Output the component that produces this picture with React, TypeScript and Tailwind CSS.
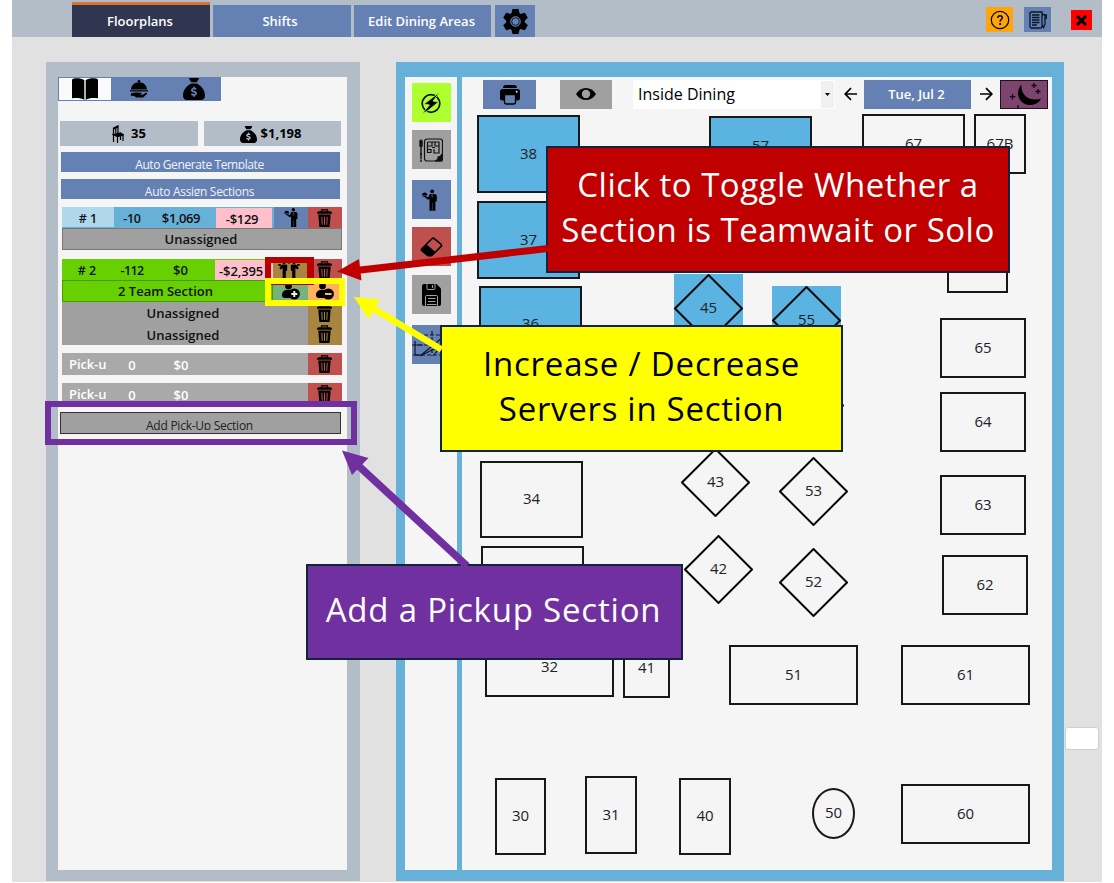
import type { ReactNode } from 'react';
import { FaSackDollar } from 'react-icons/fa6';

type IconProps = { className?: string };

const BookIcon = ({ className }: IconProps) => (
  <svg className={className} viewBox="0 0 26 22" fill="#000">
    <path d="M0 2.200C0 1 1 .6 2 .5c4-.5 7.500 0 10.300 1.700V22C9.500 20.300 6 19.700 0 20.300zM26 2.200C26 1 25 .6 24 .5c-4-.5-7.500 0-10.300 1.700V22c2.800-1.700 6.300-2.300 12.300-1.700z" />
  </svg>
);

const ServeIcon = ({ className }: IconProps) => (
  <svg className={className} viewBox="0 0 18 18" fill="#000">
    <circle cx="9" cy="1.300" r="1.300" />
    <path d="M1 9.500C1.300 5 4.500 2.200 9 2.200s7.700 2.800 8 7.300zM0 10.200h18v1.200H0zM1 13.300l4.500-.9 5.500.4c1 .2.800 1.300-.2 1.500l-2.300.3 4 .2 3-1.800c1.500-.6 2.200.4 1.200 1.300L13 17.500H6.500L4 16l-3-.3z" />
  </svg>
);

const ChairIcon = ({ className }: IconProps) => (
  <svg className={className} viewBox="0 0 12 18" fill="none" stroke="#000" strokeWidth="1.200">
    <path d="M1.500 17V3L6 .8V8M1.500 4L6 2M3.800 3v5M5.500 11.500V18M11 10.500V16M8.500 11v4" />
    <path d="M1 9.500l7.500-1.700L11.500 10l-6 1.700z" fill="#000" />
  </svg>
);

const WaiterIcon = ({ className }: IconProps) => (
  <svg className={className} viewBox="0 0 14 20" fill="#000">
    <circle cx="9.500" cy="1.900" r="1.800" />
    <path d="M7.300 4.300h4.200c1.500 0 2.300.8 2.300 2v5.200h-1.300V20H7V9L5.600 9.800 2.500 7.300l.8-1 2.500 1.300z" />
    <path d="M0 5.700C.2 3.800 1.100 3 2.500 3S4.900 3.800 5 5.700zM1 6.200h3l-.5 1H1.500z" />
    <path d="M9.500 4.500l-.6 1.300.6 2 .6-2zM9.700 13v7" stroke="#6581b3" strokeWidth=".4" />
  </svg>
);

const TeamIcon = ({ className }: IconProps) => (
  <svg className={className} viewBox="0 0 22 17" fill="#000">
    <path d="M4.500 3.500H8c1 0 1.400.8 1.300 1.500L9 10H7.800v7H4.600V7L2.500 8.500 1.300 7 3 4.500zM17.500 3.500H14c-1 0-1.400.8-1.300 1.500l.3 5h1.200v7h3.200V7l2.100 1.500L20.700 7 19 4.500zM0 3h3l-.5 2H.8zM22 3h-3l.5 2h1.700z" />
    <circle cx="6" cy="1.500" r="1.500" />
    <circle cx="16" cy="1.500" r="1.500" />
    <path d="M9.500 1h3L11 3.300z" />
  </svg>
);

const TrashIcon = ({ className }: IconProps) => (
  <svg className={className} viewBox="0 0 15 18" fill="none" stroke="#000">
    <path d="M4.500 2.500V.8h6v1.700" strokeWidth="1.200" />
    <path d="M0 4.200C0 2.900.8 2.200 2 2.200h11c1.200 0 2 .7 2 2v.6H0z" fill="#000" stroke="none" />
    <path d="M1.300 5.500h12.400L12.600 18H2.400z" fill="#000" stroke="none" />
    <path d="M4.800 7.800l.4 8M7.500 7.800v8M10.200 7.800l-.4 8" stroke="currentColor" strokeWidth="1" />
  </svg>
);

const PersonIcon = ({ className, minus }: IconProps & { minus?: boolean }) => (
  <svg className={className} viewBox="0 0 18 17" fill="#000">
    <circle cx="6.500" cy="3" r="3.400" />
    <path d="M0 12c0-3 2-5 5-5h6v8H3c-2 0-3-1-3-3z" />
    <circle cx="12.300" cy="11" r="5.600" />
    <path
      d={minus ? 'M9 10h6.600v2H9z' : 'M11.300 8h2v2h2v2h-2v2h-2v-2h-2v-2h2z'}
      fill={minus ? '#ffb060' : '#e7efe7'}
    />
  </svg>
);

const GearIcon = ({ className }: IconProps) => (
  <svg className={className} viewBox="-12.500 -12.500 25 25">
    {[0, 60, 120].map((angle) => (
      <path key={angle} d="M-3-12.500h6l1.300 5.500v14L3 12.500h-6L-4.300 7v-14z" transform={`rotate(${angle})`} />
    ))}
    <circle r="9.200" />
    <circle r="4.800" fill="#6581b3" stroke="#6581b3" />
    <circle r="3.800" fill="#6581b3" stroke="#101827" strokeWidth="1" />
  </svg>
);

const HelpIcon = ({ className }: IconProps) => (
  <svg className={className} viewBox="0 0 20 20" fill="none" stroke="#000" strokeWidth="1.200">
    <circle cx="10" cy="10" r="8.700" />
    <path d="M7.800 7.900C7.800 6.500 8.700 5.700 10 5.700s2.300.8 2.300 2.100c0 1.700-2.200 1.900-2.200 3.900" strokeWidth="1.400" />
    <circle cx="10.100" cy="14" r=".5" fill="#000" />
  </svg>
);

const NotesIcon = ({ className }: IconProps) => (
  <svg className={className} viewBox="0 0 18 18" fill="none" stroke="#0a1423" strokeWidth="1.300">
    <path d="M1.500 1h11.500v14.500c0 1-.6 1.500-1.500 1.500H2.500c-1 0-1.500-.5-1.500-1.500V1M3 4h7.500M3 6.500h7.500M3 9h7.500M3 11.500h7.500M3 14h5M13 5c0-2 3-2 3 0v8l-1.500 3.500-1.500-3M16 4h1.500v4" />
  </svg>
);

const BoltIcon = ({ className }: IconProps) => (
  <svg className={className} viewBox="0 0 22 22">
    <circle cx="11" cy="11.500" r="8.800" fill="none" stroke="#0a1400" strokeWidth="1.700" />
    <path d="M20 0L14 4.500 4 12l5.500 1L2 22l6-3.500L18.500 10 13 9z" stroke="#adff2f" strokeWidth=".8" />
  </svg>
);

const PlanIcon = ({ className }: IconProps) => (
  <svg className={className} viewBox="0 0 24 24" fill="none" stroke="#111" strokeWidth="1.200">
    <path d="M2 1.500v20M1 3v5h2V3zM1 16h2M2 22v2" strokeWidth="1.400" />
    <rect x="5.500" y="1" width="18" height="22" rx="2.500" />
    <path d="M8.500 4H20v11h-5v-4M8.500 4v7.500H12v3H8.500zM13 4v4H9M16 4v4h4M13 9.500h3" />
    <path d="M23 16v7h-7c4-1 3-3 3-4 2 0 3-.5 4-3z" fill="#111" />
  </svg>
);

const EraserIcon = ({ className }: IconProps) => (
  <svg className={className} viewBox="0 0 22 20">
    <path d="M1.500 11.500L11.500 1.800q1.200-1.200 2.500 0l6.400 5.400q1.200 1.200 0 2.400L11 18.700H7.500L1.500 14q-1.200-1.200 0-2.500z" fill="none" stroke="#000" strokeWidth="1.600" />
    <path d="M6 7.300l9.300 8L11 18.700H7.500L1.500 14q-1.200-1.200 0-2.500z" />
  </svg>
);

const SaveIcon = ({ className }: IconProps) => (
  <svg className={className} viewBox="0 0 19 22">
    <path d="M2 0h12.500L19 4.500V20q0 2-2 2H2q-2 0-2-2V2q0-2 2-2z" />
    <path d="M5 0v4.500q0 1 1 1h6q1 0 1-1V0M3.500 22V12.500q0-1 1-1h10q1 0 1 1V22" fill="none" stroke="#a0a0a0" />
    <path d="M10.500 1v3M6 14.500h7.500M6 17.500h7.500M5 20.500h9.500" stroke="#a0a0a0" strokeWidth="1.200" />
  </svg>
);

const GridIcon = ({ className }: IconProps) => (
  <svg className={className} viewBox="0 0 39 39" fill="none" stroke="#0c1630" strokeWidth="1.200">
    <path d="M6 10h26M20 6v25M0 20h39M3 30h34" strokeDasharray="4 2" />
    <path d="M3 16v14M1 30h8M3 20h8M31 12L8 31l12-6 8-3-6 8" />
  </svg>
);

const PrinterIcon = ({ className }: IconProps) => (
  <svg className={className} viewBox="0 0 20 20">
    <path d="M3 3q0-3 3-3h8q3 0 3 3zM2.500 4h15Q20 4 20 6.500V13q0 2.500-2.500 2.500h-15Q0 15.500 0 13V6.500Q0 4 2.500 4z" />
    <path d="M4.500 9.500h11V17q0 2-2 2h-7q-2 0-2-2z" fill="#6581b3" stroke="#000" strokeWidth="1.300" />
    <circle cx="16.700" cy="6.800" r="1" fill="#cfd9ea" />
  </svg>
);

const EyeIcon = ({ className }: IconProps) => (
  <svg className={className} viewBox="0 0 20 12">
    <path d="M0 6C2.500 2 6 0 10 0s7.500 2 10 6c-2.500 4-6 6-10 6S2.500 10 0 6z" />
    <circle cx="10" cy="6" r="4.200" fill="#a0a0a0" />
  </svg>
);

const MoonIcon = ({ className }: IconProps) => (
  <svg className={className} viewBox="0 0 46 27">
    <path d="M20.500 3.500C14 10 17 23 27.500 24c6 .5 10.500-2 12.500-6.500C31 21 19.500 16 20.500 3.500z" />
    <path d="M33 2v5M30.500 4.500h5M37 8v5M34.500 10.500h5M11.500 13v5.500M8.800 15.700h5.500M17 24v3" stroke="#160414" strokeWidth="1.300" />
  </svg>
);

const Arrow = ({ right }: { right?: boolean }) => (
  <svg className="h-3.5 w-[13px] shrink-0" viewBox="0 0 13 14" fill="none" stroke="#000" strokeWidth="1.700">
    <path d={right ? 'M0 7h11.500M6 1.200L11.800 7 6 12.800' : 'M13 7H1.500M7 1.200L1.200 7 7 12.800'} />
  </svg>
);

const Tab = ({ children, className }: { children: ReactNode; className: string }) => (
  <div className={`flex h-8 items-center justify-center text-[13px] font-semibold text-white ${className}`}>{children}</div>
);

const TrashCell = ({ className = 'bg-[#c0504d] text-[#c0504d]' }: IconProps) => (
  <div className={`flex w-[34px] shrink-0 items-center justify-center pr-0.5 ${className}`}>
    <TrashIcon className="h-[18px] w-[15px]" />
  </div>
);

const PickupRow = () => (
  <div className="flex h-[22px] bg-[#a9a9a9] text-[13px] font-semibold text-white">
    <span className="w-[52px] pl-[7px] leading-[23px] tracking-[-0.1px]">Pick-u</span>
    <span className="w-9 text-center leading-6">0</span>
    <span className="w-[62px] text-center leading-6">$0</span>
    <span className="flex-1" />
    <TrashCell />
  </div>
);

type Shape = 'rect' | 'diamond' | 'oval';
type TableInfo = { label?: string; x: number; y: number; w: number; h: number; shape?: Shape; blue?: boolean };

const tables: TableInfo[] = [
  { label: '38', x: 477, y: 115, w: 103, h: 78, blue: true },
  { label: '37', x: 477, y: 201, w: 103, h: 78, blue: true },
  { label: '36', x: 479, y: 286, w: 103, h: 77, blue: true },
  { label: '57', x: 709, y: 116, w: 103, h: 60, blue: true },
  { label: '67', x: 862, y: 114, w: 103, h: 60 },
  { label: '67B', x: 974, y: 114, w: 52, h: 60 },
  { x: 947, y: 216, w: 61, h: 77 },
  { label: '65', x: 940, y: 318, w: 86, h: 60 },
  { label: '64', x: 940, y: 392, w: 86, h: 60 },
  { label: '63', x: 940, y: 475, w: 86, h: 60 },
  { label: '62', x: 942, y: 555, w: 86, h: 60 },
  { label: '45', x: 674, y: 274, w: 69, h: 69, shape: 'diamond', blue: true },
  { label: '55', x: 772, y: 286, w: 69, h: 69, shape: 'diamond', blue: true },
  { x: 775, y: 371, w: 69, h: 69, shape: 'diamond' },
  { label: '43', x: 681, y: 448, w: 69, h: 69, shape: 'diamond' },
  { label: '53', x: 779, y: 457, w: 69, h: 69, shape: 'diamond' },
  { label: '42', x: 684, y: 535, w: 69, h: 69, shape: 'diamond' },
  { label: '52', x: 779, y: 548, w: 69, h: 69, shape: 'diamond' },
  { label: '34', x: 480, y: 461, w: 103, h: 77 },
  { x: 481, y: 546, w: 103, h: 77 },
  { label: '32', x: 485, y: 637, w: 129, h: 60 },
  { label: '41', x: 623, y: 638, w: 47, h: 60 },
  { label: '51', x: 729, y: 645, w: 129, h: 60 },
  { label: '61', x: 901, y: 645, w: 129, h: 60 },
  { label: '60', x: 901, y: 784, w: 129, h: 60 },
  { label: '30', x: 495, y: 778, w: 51, h: 77 },
  { label: '31', x: 585, y: 776, w: 52, h: 78 },
  { label: '40', x: 679, y: 778, w: 52, h: 77 },
  { label: '50', x: 812, y: 788, w: 43, h: 51, shape: 'oval' },
];

const Table = ({ label, x, y, w, h, shape = 'rect', blue }: TableInfo) => {
  const frame = shape === 'rect' ? 'border-2 border-[#181818]' : shape === 'oval' ? 'rounded-[50%] border-2 border-[#181818]' : '';
  return (
    <div
      className={`absolute flex items-center justify-center text-[15px] text-[#222] ${frame} ${blue ? 'bg-[#5bb3e2]' : ''}`}
      style={{ left: x - 462, top: y - 77, width: w, height: h }}
    >
      {shape === 'diamond' && (
        <svg className="absolute inset-0 size-full" viewBox="0 0 69 69" fill="none" stroke="#080808" strokeWidth="2">
          <path d="M34.500 1L68 34.500 34.500 68 1 34.500z" />
        </svg>
      )}
      {label && <span className="relative pb-0.5">{label}</span>}
    </div>
  );
};

const ToolButton = ({ children, className }: { children: ReactNode; className: string }) => (
  <div className={`flex size-[39px] shrink-0 items-center justify-center ${className}`}>{children}</div>
);

const Sections = () => (
  <div className="text-[13px] font-semibold text-[#111]">
    <div className="mr-[5px] ml-1">
      <div className="mt-2 flex h-[21px] bg-[#67b0d8] leading-[23px]">
        <span className="h-5 w-[52px] bg-[#b0d8ec] text-center text-[12.500px]"># 1</span>
        <span className="w-9 text-center text-[12.500px] tracking-[-0.3px]">-10</span>
        <span className="w-[66px] pr-1 text-center tracking-[-0.4px]">$1,069</span>
        <span className="mt-px w-14 bg-[#ffc0cb] pr-1 text-center leading-[22px] tracking-[-0.3px]">-$129</span>
        <span className="ml-0.5 flex w-[34px] items-center justify-center bg-[#6581b3]"><WaiterIcon className="h-[19px] w-[14px]" /></span>
        <TrashCell />
      </div>
      <div className="h-[22px] border border-[#777] bg-[#a0a0a0] pr-0.5 text-center leading-[21px]">Unassigned</div>
      <div className="mt-[9px] flex h-[21px] bg-[#66d000] leading-[23px]">
        <span className="w-[52px] pr-0.5 text-center text-[12.500px]"># 2</span>
        <span className="w-9 text-center text-[12.500px] tracking-[-0.6px]">-112</span>
        <span className="w-[65px] pr-1 text-center">$0</span>
        <span className="mt-px w-[58px] overflow-hidden bg-[#ffc0cb] pl-1 leading-[22px] tracking-[-0.1px]">-$2,395</span>
        <span className="flex w-[35px] items-center justify-center bg-[#a88642] pr-1"><TeamIcon className="h-[17px] w-[22px]" /></span>
        <TrashCell />
      </div>
      <div className="flex h-[22px]">
        <span className="w-[211px] border border-[#4b9a00] bg-[#66d000] pr-1 text-center leading-[21px]">2 Team Section</span>
        <span className="flex w-[35px] items-center justify-center bg-[#74b37a]"><PersonIcon className="h-[17px] w-[18px]" /></span>
        <span className="flex w-[34px] items-center justify-center bg-[#ffb060]"><PersonIcon minus className="h-[17px] w-[18px]" /></span>
      </div>
      {['first', 'second'].map((seat) => (
        <div key={seat} className="flex h-[21.500px] bg-[#a0a0a0]">
          <span className="flex-1 pr-1 text-center leading-[22px]">Unassigned</span>
          <TrashCell className="bg-[#a88642] text-[#a88642]" />
        </div>
      ))}
      <div className="mt-2 flex flex-col gap-2">
        <PickupRow />
        <PickupRow />
      </div>
    </div>
    <div className="mt-[7px] mr-1.5 ml-0.5 h-[22px] overflow-hidden border border-[#333] bg-[#a0a0a0] text-[12px] font-normal">
      <p className="h-[17px] overflow-hidden pr-0.5 text-center leading-[25px] tracking-[-0.25px] text-[#222]">Add Pick-Up Section</p>
    </div>
  </div>
);

const callout = 'absolute flex flex-col items-center justify-center border-2 border-[#10243a] pb-[5px] whitespace-nowrap text-[33px] leading-[45px]';

export default function App() {
  return (
    <div className="relative h-[883px] w-[1114px] overflow-hidden bg-white pr-3 pl-3 font-['Open_Sans',sans-serif]">
      <div className="flex h-[882px] flex-col bg-[#e1e1e1]">
        <header className="flex h-[37px] shrink-0 items-end bg-[#b2bdc7] pr-2.5 pl-[60px]">
          <Tab className="mr-[3px] h-[35px] w-[138px] border-t-[3px] border-[#d9722e] bg-[#30364f] pt-0.5 pr-0.5">Floorplans</Tab>
          <Tab className="mr-[3px] w-[138px] bg-[#6581b3] pt-0.5 pr-1">Shifts</Tab>
          <Tab className="mr-1 w-[137px] bg-[#6581b3] pt-0.5 pr-0.5">Edit Dining Areas</Tab>
          <Tab className="w-10 bg-[#6581b3]"><GearIcon className="size-[25px]" /></Tab>
          <div className="mb-[5px] ml-auto flex h-[25px] w-[27px] items-center justify-center bg-[#ffa50a]"><HelpIcon className="size-5" /></div>
          <div className="mb-[5px] ml-[11px] flex h-[25px] w-[27px] items-center justify-center bg-[#6581b3]"><NotesIcon className="size-[18px]" /></div>
          <div className="mb-[7px] ml-5 flex h-5 w-[21px] items-center justify-center bg-[#ff0000]">
            <svg className="size-[11px]" viewBox="0 0 11 11" stroke="#000" strokeWidth="3"><path d="M1 1l9 9M10 1l-9 9" /></svg>
          </div>
        </header>

        <main className="mt-[25px] flex h-[819px] pl-[34px]">
          <aside className="w-[314px] bg-[#b2bdc7] pt-[15px] pr-[13px] pb-[11px] pl-3">
            <div className="h-full bg-[#f5f5f5]">
              <div className="flex h-6 w-[163px] border border-[#6581b3] bg-[#6581b3]">
                <span className="flex w-[52px] items-center justify-center bg-[#fafafa]"><BookIcon className="h-[22px] w-[26px]" /></span>
                <span className="flex w-14 items-center justify-center"><ServeIcon className="h-[18px] w-[18px]" /></span>
                <span className="flex w-[53px] items-center justify-center"><FaSackDollar className="h-[22px] w-6" /></span>
              </div>
              <div className="mt-5 ml-0.5 flex h-[25px] gap-1.5 text-[13px] font-bold text-black">
                <div className="flex w-[138px] items-center justify-center gap-[7px] bg-[#b2bdc7]"><ChairIcon className="h-[18px] w-3" />35</div>
                <div className="flex w-[137px] items-center justify-center gap-1 bg-[#b2bdc7] pt-px pr-1"><FaSackDollar className="size-[17px]" /><span>$1,198</span></div>
              </div>
              <div className="mt-1.5 mr-[7px] ml-[3px] h-5 bg-[#6581b3] text-center text-[12px] text-[#eef3fb]">
                <p className="h-[17px] overflow-hidden pr-0.5 leading-[25px] tracking-[-0.4px]">Auto Generate Template</p>
              </div>
              <div className="mt-[7px] mr-[7px] ml-[3px] h-5 bg-[#6581b3] text-center text-[12px] text-[#eef3fb]">
                <p className="h-[17px] overflow-hidden pr-0.5 leading-[25px] tracking-[-0.3px]">Auto Assign Sections</p>
              </div>
              <Sections />
            </div>
          </aside>

          <section className="ml-9 flex w-[668px] gap-[5px] bg-[#67b0d8] pt-[15px] pr-3 pb-[11px] pl-[9px]">
            <nav className="flex w-[52px] flex-col items-center bg-[#f5f5f5] pt-1.5">
              <ToolButton className="mb-2 bg-[#adff2f]"><BoltIcon className="size-[22px]" /></ToolButton>
              <ToolButton className="mb-[11px] bg-[#a0a0a0]"><PlanIcon className="size-6" /></ToolButton>
              <ToolButton className="mb-2 bg-[#6581b3] pr-1"><WaiterIcon className="h-[22px] w-[15px]" /></ToolButton>
              <ToolButton className="mb-[9px] bg-[#c0504d]"><EraserIcon className="h-5 w-[23px]" /></ToolButton>
              <ToolButton className="mb-[11px] bg-[#a0a0a0]"><SaveIcon className="h-[22px] w-[19px]" /></ToolButton>
              <ToolButton className="bg-[#6581b3]"><GridIcon className="size-[39px]" /></ToolButton>
            </nav>

            <div className="relative flex-1 bg-[#f5f5f5]">
              <div className="flex h-8 items-center pt-0.5 pl-[21px]">
                <div className="mt-px flex h-[29px] w-[53px] items-center justify-center bg-[#6581b3]"><PrinterIcon className="size-5" /></div>
                <div className="ml-6 flex h-[29px] w-[52px] items-center justify-center bg-[#a0a0a0]"><EyeIcon className="h-3 w-5" /></div>
                <div className="ml-[21px] flex h-[29px] w-[202px] items-center bg-white pr-px pl-[5px] text-[16px] text-black">
                  <span>Inside Dining</span>
                  <span className="ml-auto flex h-[27px] w-[13px] items-center justify-center bg-[#f0f0f0]">
                    <svg className="h-[3px] w-[5px]" viewBox="0 0 5 3"><path d="M0 0h5L2.500 3z" /></svg>
                  </span>
                </div>
                <div className="mr-[7px] ml-[9px]"><Arrow /></div>
                <div className="flex h-[29px] w-[107px] items-center justify-center bg-[#6581b3] pt-px pr-0.5 text-[13px] font-semibold text-white">Tue, Jul 2</div>
                <div className="mr-[7px] ml-[9px]"><Arrow right /></div>
                <div className="h-[29px] w-12 border border-[#22111f] bg-[#7b456e]"><MoonIcon className="h-[27px] w-[46px]" /></div>
              </div>
              {tables.map((table) => <Table key={`${table.x}-${table.y}`} {...table} />)}
            </div>
          </section>
        </main>
      </div>

      <div className="absolute top-[727px] left-[1065px] h-[23px] w-[34px] rounded-[3px] border border-[#d0d0d0] bg-white" />

      <div className="absolute top-[257px] left-[265px] h-[28px] w-[49px] border-[6px] border-r-[7px] border-[#b80000]" />
      <div className="absolute top-[278px] left-[265px] h-[28px] w-[80px] border-[6px] border-[#ffff00]" />
      <div className="absolute top-[401px] left-[45px] h-[44px] w-[312px] border-[6px] border-[#7030a0]" />

      <div className={`${callout} top-[146px] left-[546px] h-[127px] w-[464px] bg-[#c00000] text-white`}>
        <span className="tracking-[0.5px]">Click to Toggle Whether a</span>
        <span className="tracking-[0.5px]">Section is Teamwait or Solo</span>
      </div>
      <div className={`${callout} top-[325px] left-[440px] h-[127px] w-[403px] bg-[#ffff00] text-black`}>
        <span className="tracking-[0.8px]">Increase / Decrease</span>
        <span className="tracking-[0.7px]">Servers in Section</span>
      </div>
      <div className={`${callout} top-[564px] left-[306px] h-[96px] w-[377px] bg-[#7030a0] text-white`}>
        <span className="pr-0.5 tracking-[0.8px]">Add a Pickup Section</span>
      </div>

      <svg className="pointer-events-none absolute inset-0 size-full" viewBox="0 0 1114 883">
        <path d="M337 271.500L359 259l2.500 21.500z" fill="#c00000" />
        <path d="M356 270.500L548 248.500" stroke="#c00000" strokeWidth="7" />
        <path d="M354 297l26 2.500L368.500 319z" fill="#ffff00" />
        <path d="M371 307L441.500 349.500" stroke="#ffff00" strokeWidth="6.500" />
        <path d="M342 450.500l26.500 7.500L352 475z" fill="#7030a0" />
        <path d="M356 463.500L467 566" stroke="#7030a0" strokeWidth="7.500" />
      </svg>
    </div>
  );
}
